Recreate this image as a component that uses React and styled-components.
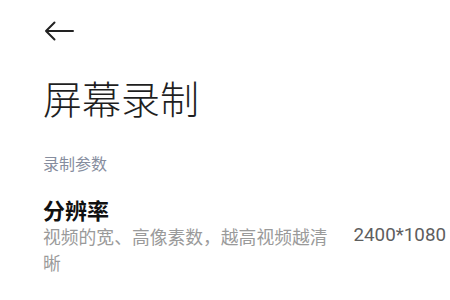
import React from "react";
import styled, { createGlobalStyle } from "styled-components";

const Global = createGlobalStyle`
  html, body { margin: 0; padding: 0; background: #ffffff; }
  body { font-family: "Noto Sans CJK SC", "Noto Sans", Roboto, sans-serif; }
`;

const Page = styled.div`
  width: 450px;
  height: 300px;
  overflow: hidden;
  background: #ffffff;
  padding: 0 4px 0 43px;
  box-sizing: border-box;
`;

const TopBar = styled.div`
  height: 62px;
  display: flex;
  align-items: center;
`;

const BackButton = styled.button`
  border: 0;
  background: none;
  padding: 0;
  margin-left: 1px;
  width: 30px;
  height: 20px;
  display: flex;
  align-items: center;
  color: #222222;
`;

const Title = styled.h1`
  margin: 12px 0 0;
  font-size: 39px;
  line-height: 46px;
  font-weight: 300;
  color: #1f1f1f;
  letter-spacing: 0;
`;

const SectionLabel = styled.div`
  margin-top: 32px;
  font-size: 16px;
  line-height: 22px;
  color: #868d9e;
`;

const Row = styled.div`
  margin-top: 21px;
  display: flex;
  align-items: center;
  justify-content: space-between;
`;

const TextCol = styled.div`
  width: 290px;
`;

const ItemTitle = styled.div`
  font-size: 22px;
  line-height: 28px;
  font-weight: 700;
  color: #111111;
`;

const ItemDesc = styled.div`
  font-size: 17.8px;
  line-height: 26px;
  color: #9a9a9a;
`;

const Value = styled.div`
  font-family: Roboto, "Noto Sans", sans-serif;
  font-size: 18.8px;
  color: #5e5e5e;
  white-space: nowrap;
`;

export default function App() {
  return (
    <>
      <Global />
      <Page>
        <TopBar>
          <BackButton aria-label="返回">
            <svg width="30" height="20" viewBox="0 0 30 20" fill="none">
              <path d="M29 10H2M10.5 1.5L2 10l8.5 8.5" stroke="currentColor" strokeWidth="2" strokeLinecap="round" strokeLinejoin="round" />
            </svg>
          </BackButton>
        </TopBar>
        <Title>屏幕录制</Title>
        <SectionLabel>录制参数</SectionLabel>
        <Row>
          <TextCol>
            <ItemTitle>分辨率</ItemTitle>
            <ItemDesc>视频的宽、高像素数，越高视频越清晰</ItemDesc>
          </TextCol>
          <Value>2400*1080</Value>
        </Row>
      </Page>
    </>
  );
}
